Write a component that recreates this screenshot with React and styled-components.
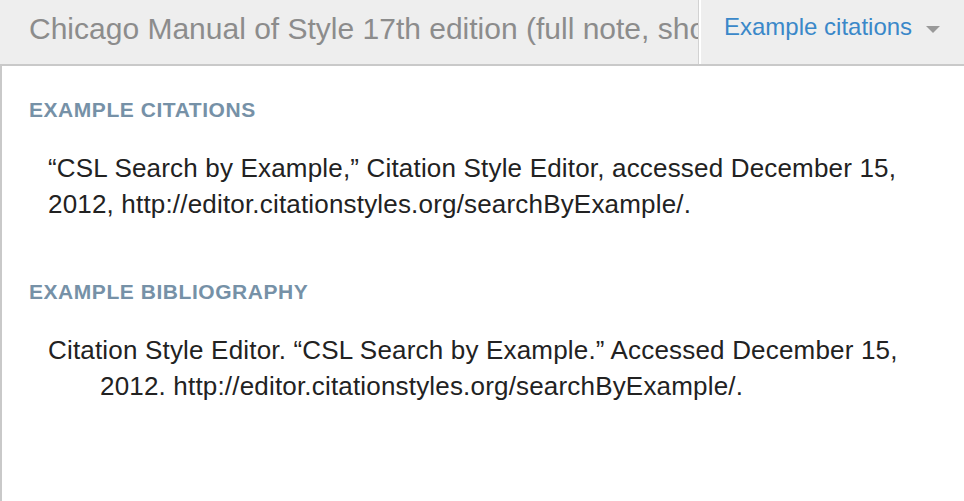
import React from "react";
import styled, { createGlobalStyle } from "styled-components";

const Global = createGlobalStyle`
  html, body { margin: 0; padding: 0; background: #ffffff; }
  body { font-family: "Liberation Sans", Arial, Helvetica, sans-serif; }
  #root { height: 501px; overflow: hidden; }
`;

const Page = styled.div`
  display: flex;
  flex-direction: column;
  height: 501px;
  width: 964px;
`;

const Header = styled.header`
  display: flex;
  height: 64px;
  background: #eeeeee;
  border-bottom: 2px solid #c9c9c9;
  flex-shrink: 0;
`;

const StyleTitle = styled.div`
  flex: 0 0 669px;
  padding-left: 29px;
  overflow: hidden;
  white-space: nowrap;
  font-size: 30px;
  line-height: 58px;
  color: #8c8c8c;
`;

const Dropdown = styled.button`
  flex: 1;
  display: flex;
  align-items: flex-start;
  gap: 14px;
  padding: 0 0 0 25px;
  margin: 0;
  border: none;
  border-left: 1px solid #d2d2d2;
  box-shadow: inset 2px 0 0 #ffffff;
  background: transparent;
  font-family: inherit;
  font-size: 24px;
  line-height: 54px;
  color: #3a88c9;
  cursor: pointer;
  text-align: left;
`;

const Caret = styled.svg`
  margin-top: 26px;
  flex-shrink: 0;
`;

const Content = styled.main`
  flex: 1;
  border-left: 2px solid #c9c9c9;
  padding: 31px 10px 0 27px;
`;

const SectionTitle = styled.h2`
  margin: 0;
  font-size: 21px;
  line-height: 26px;
  font-weight: bold;
  letter-spacing: 0.55px;
  color: #7691a7;
  text-transform: uppercase;
`;

const Entry = styled.p`
  margin: 27px 0 0 0;
  padding-left: ${(p) => p.$indent}px;
  text-indent: ${(p) => p.$hang}px;
  font-size: 26px;
  line-height: 36px;
  letter-spacing: 0.18px;
  color: #222222;
`;

const Section = styled.section`
  margin-bottom: ${(p) => p.$gap}px;
`;

export default function App() {
  return (
    <>
      <Global />
      <Page>
        <Header>
          <StyleTitle>
            Chicago Manual of Style 17th edition (full note, short form)
          </StyleTitle>
          <Dropdown type="button">
            <span>Example citations</span>
            <Caret width="14" height="7" viewBox="0 0 14 7">
              <path d="M0 0 L14 0 L7 7 Z" fill="#999999" />
            </Caret>
          </Dropdown>
        </Header>
        <Content>
          <Section $gap={57}>
            <SectionTitle>Example citations</SectionTitle>
            <Entry $indent={19} $hang={0}>
              “CSL Search by Example,” Citation Style Editor, accessed December
              15, 2012, http://editor.citationstyles.org/searchByExample/.
            </Entry>
          </Section>
          <Section $gap={0}>
            <SectionTitle>Example bibliography</SectionTitle>
            <Entry $indent={71} $hang={-52}>
              Citation Style Editor. “CSL Search by Example.” Accessed December
              15, 2012. http://editor.citationstyles.org/searchByExample/.
            </Entry>
          </Section>
        </Content>
      </Page>
    </>
  );
}
